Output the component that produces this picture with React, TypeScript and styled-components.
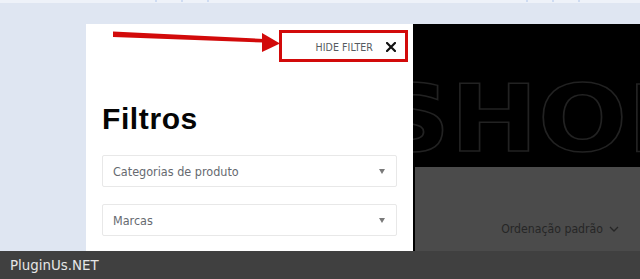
import React from "react";
import styled, { createGlobalStyle } from "styled-components";

const Global = createGlobalStyle`
  html, body { margin: 0; padding: 0; }
  body {
    width: 640px;
    height: 279px;
    overflow: hidden;
    background: #dfe6f2;
    font-family: "DejaVu Sans Condensed", "DejaVu Sans", sans-serif;
  }
`;

const Page = styled.div`
  display: flex;
  flex-direction: column;
  height: 279px;
  overflow: hidden;
`;

const TopStrip = styled.div`
  height: 3px;
  flex: none;
  background: #eef2f9;
  display: flex;
  align-items: flex-start;
  padding-left: 155px;
`;

const TickGroup = styled.div<{ $offset?: number }>`
  display: flex;
  gap: 24px;
  margin-left: ${(p) => p.$offset ?? 0}px;
`;

const Tick = styled.span`
  width: 2px;
  height: 2px;
  background: #cfdcf2;
`;

const Main = styled.div`
  flex: 1;
  display: flex;
  padding: 21px 0 0 86px;
  min-height: 0;
`;

const Panel = styled.aside`
  position: relative;
  width: 327px;
  flex: none;
  background: #ffffff;
  padding: 0 16px;
  box-sizing: border-box;
  display: flex;
  flex-direction: column;
`;

const HeaderRow = styled.div`
  height: 46px;
  display: flex;
  align-items: center;
  justify-content: flex-end;
`;

const HideButton = styled.button`
  display: flex;
  align-items: center;
  gap: 13px;
  background: none;
  border: none;
  padding: 0;
  margin-right: 1px;
  font-family: "DejaVu Sans Condensed", "DejaVu Sans", sans-serif;
  font-size: 10.5px;
  color: #555a60;
  letter-spacing: 0.1px;
  cursor: pointer;
`;

const Highlight = styled.div`
  position: absolute;
  left: 193px;
  top: 6px;
  width: 129px;
  height: 32px;
  box-sizing: border-box;
  border: 3px solid #d20a0a;
  pointer-events: none;
`;

const Arrow = styled.svg`
  position: absolute;
  left: 0;
  top: 0;
  overflow: visible;
  pointer-events: none;
`;

const Title = styled.h2`
  margin: 34px 0 0 0;
  font-family: "Liberation Sans", Arial, sans-serif;
  font-weight: 700;
  font-size: 30px;
  line-height: 30px;
  letter-spacing: 0.6px;
  color: #050505;
`;

const Select = styled.div<{ $gap: number }>`
  margin-top: ${(p) => p.$gap}px;
  height: 32px;
  box-sizing: border-box;
  border: 1px solid #e8e8e8;
  border-radius: 2px;
  display: flex;
  align-items: center;
  justify-content: space-between;
  padding: 0 11px 0 10px;
  font-size: 12.5px;
  color: #666a70;
`;

const Caret = styled.span`
  width: 0;
  height: 0;
  border-left: 3.5px solid transparent;
  border-right: 3.5px solid transparent;
  border-top: 5px solid #7a7a7a;
`;

const Right = styled.section`
  flex: 1;
  display: flex;
  flex-direction: column;
  background: #000;
  min-width: 0;
`;

const Hero = styled.div`
  height: 143px;
  flex: none;
  overflow: hidden;
  display: flex;
  align-items: flex-end;
  justify-content: center;
  padding-bottom: 1px;
  box-sizing: border-box;
`;

const HeroText = styled.span`
  display: inline-block;
  font-family: "DejaVu Sans", sans-serif;
  font-weight: 700;
  font-size: 92px;
  line-height: 1;
  color: transparent;
  -webkit-text-stroke: 1.5px #222;
  white-space: nowrap;
  transform: translateX(13px) scaleX(1.14);
`;

const Content = styled.div`
  flex: 1;
  margin-left: 2px;
  background: #4b4b4b;
  display: flex;
  justify-content: flex-end;
  align-items: flex-start;
  padding: 55px 21px 0 0;
`;

const Sort = styled.div`
  display: flex;
  align-items: center;
  gap: 6px;
  font-size: 12.2px;
  color: #262626;
`;

const BottomBar = styled.div`
  position: fixed;
  left: 0;
  right: 0;
  bottom: 0;
  height: 28px;
  background: #404040;
  display: flex;
  align-items: center;
  padding-left: 10px;
  font-family: "DejaVu Sans", sans-serif;
  font-size: 13.4px;
  color: #e6e6e6;
`;

export default function App() {
  return (
    <>
      <Global />
      <Page>
        <TopStrip>
          <TickGroup>
            <Tick />
            <Tick />
            <Tick />
          </TickGroup>
          <TickGroup $offset={317}>
            <Tick />
            <Tick />
            <Tick />
          </TickGroup>
        </TopStrip>
        <Main>
          <Panel>
            <HeaderRow>
              <HideButton>
                HIDE FILTER
                <svg width="10" height="10" viewBox="0 0 10 10">
                  <path d="M1 1 L9 9 M9 1 L1 9" stroke="#111" strokeWidth="2.2" strokeLinecap="square" />
                </svg>
              </HideButton>
            </HeaderRow>
            <Title>Filtros</Title>
            <Select $gap={21}>
              Categorias de produto
              <Caret />
            </Select>
            <Select $gap={17}>
              Marcas
              <Caret />
            </Select>
            <Highlight />
            <Arrow width="1" height="1">
              <polygon points="27,7.5 178,15 178,18.5 27,13" fill="#d20a0a" />
              <polygon points="176,9 194,19.5 176,28" fill="#d20a0a" />
            </Arrow>
          </Panel>
          <Right>
            <Hero>
              <HeroText>SHOP</HeroText>
            </Hero>
            <Content>
              <Sort>
                Ordenação padrão
                <svg width="10" height="6" viewBox="0 0 10 6">
                  <path d="M1 1 L5 5 L9 1" fill="none" stroke="#262626" strokeWidth="1.3" />
                </svg>
              </Sort>
            </Content>
          </Right>
        </Main>
        <BottomBar>PluginUs.NET</BottomBar>
      </Page>
    </>
  );
}
